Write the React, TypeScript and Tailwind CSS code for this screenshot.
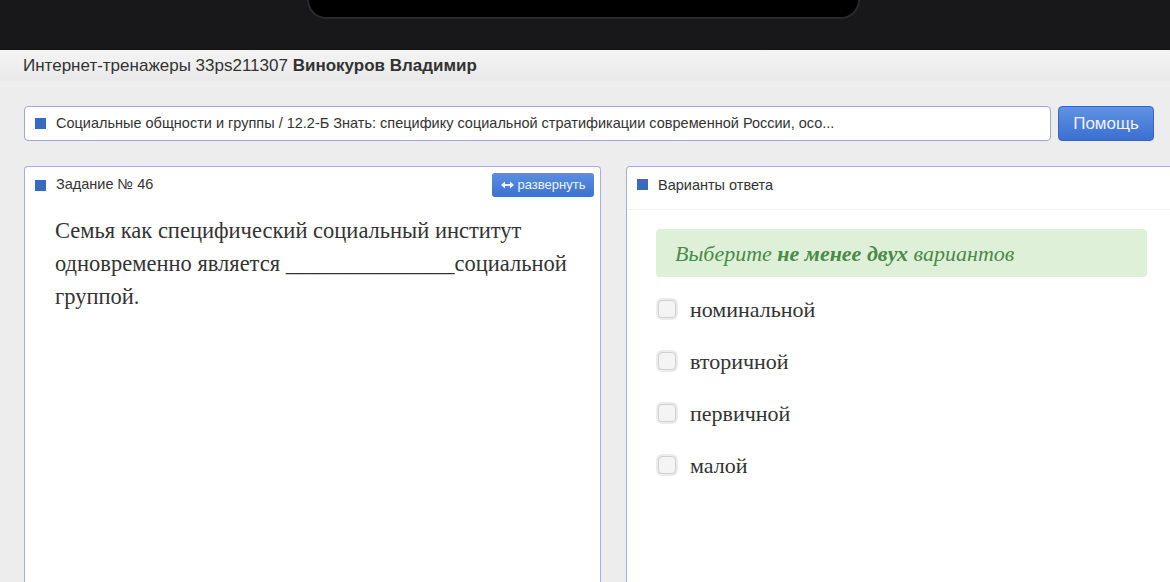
import React from "react";

const sans = { fontFamily: '"Liberation Sans", Arial, sans-serif' };
const serif = { fontFamily: '"Liberation Serif", "Times New Roman", serif' };

function Square() {
  return <span className="inline-block w-[11px] h-[11px] bg-[#3a69c2] shrink-0" />;
}

function Checkbox() {
  return (
    <span className="inline-block w-[18px] h-[18px] rounded-[4px] bg-[#f4f4f4] border border-[#cfcfcf] shadow-[0_0_0_2px_#ececec] shrink-0" />
  );
}

export default function App() {
  const options = ["номинальной", "вторичной", "первичной", "малой"];
  return (
    <div className="w-[1170px] h-[582px] overflow-hidden bg-[#ededed] flex flex-col" style={sans}>
      {/* top dark bar */}
      <div className="h-[50px] bg-[#18181b] shrink-0 flex">
        <div className="ml-[307px] w-[553px] h-[19px] bg-black rounded-b-[34px] border-2 border-t-0 border-[#2a2a2d]" />
      </div>
      {/* header */}
      <div className="h-[31px] shrink-0 bg-gradient-to-b from-[#f4f4f4] to-[#e9e9e9] flex items-center pl-[23px] text-[17px] text-[#333]">
        <span>
          Интернет-тренажеры 33ps211307 <b>Винокуров Владимир</b>
        </span>
      </div>
      <div className="flex-1 flex flex-col pl-[24px] pt-[25px] min-h-0">
        {/* topic row */}
        <div className="flex gap-[7px] pr-[16px] h-[35px] shrink-0">
          <div className="flex-1 bg-white border border-[#a3a6cf] rounded-[4px] flex items-center gap-[10px] pl-[10px] text-[14.5px] text-[#333]">
            <Square />
            <span>Социальные общности и группы / 12.2-Б Знать: специфику социальной стратификации современной России, осо...</span>
          </div>
          <button className="w-[96px] rounded-[4px] bg-gradient-to-b from-[#5f93e3] to-[#3c6fd0] border border-[#3a66bf] text-[#eef3fc] text-[17px] flex items-center justify-center">
            Помощь
          </button>
        </div>
        {/* panels */}
        <div className="flex gap-[25px] mt-[25px] flex-1 min-h-0">
          <div className="w-[577px] shrink-0 bg-white border border-b-0 border-[#a9aed8] rounded-t-[4px] flex flex-col">
            <div className="h-[36px] flex items-center pl-[10px] pr-[6px] gap-[10px] text-[14.5px] text-[#333]">
              <Square />
              <span className="flex-1">Задание № 46</span>
              <button className="w-[102px] h-[24px] rounded-[3px] bg-gradient-to-b from-[#5b8fe0] to-[#3d70d0] text-[#eef3fc] text-[13px] flex items-center justify-center gap-[4px]">
                <svg width="13" height="8" viewBox="0 0 13 8" fill="#eef3fc">
                  <path d="M0 4 L4 0.5 L4 3 L9 3 L9 0.5 L13 4 L9 7.5 L9 5 L4 5 L4 7.5 Z" />
                </svg>
                развернуть
              </button>
            </div>
            <div className="pl-[30px] pr-[20px] pt-[11px] text-[22.5px] leading-[33px] text-[#333]" style={serif}>
              Семья как специфический социальный институт одновременно является _______________социальной группой.
            </div>
          </div>
          <div className="w-[577px] shrink-0 bg-white border border-b-0 border-[#a9aed8] rounded-t-[4px] flex flex-col">
            <div className="h-[43px] flex items-start pt-[12px] pl-[10px] gap-[10px] text-[14.5px] text-[#333] border-b border-[#f3f3f3]">
              <Square />
              <span className="-mt-[2px] leading-[16px]">Варианты ответа</span>
            </div>
            <div className="pl-[29px] pr-[10px] pt-[19px]">
              <div className="w-[491px] h-[48px] bg-[#dff0d8] rounded-[4px] flex items-center pl-[19px] text-[22px] italic text-[#4a8a49]" style={serif}>
                Выберите&nbsp;<b>не менее двух</b>&nbsp;вариантов
              </div>
              <div className="flex flex-col mt-[6px]">
                {options.map((o) => (
                  <div key={o} className="h-[52px] flex items-center gap-[14px] pl-[2px] text-[22px] text-[#333]" style={serif}>
                    <Checkbox />
                    <span>{o}</span>
                  </div>
                ))}
              </div>
            </div>
          </div>
        </div>
      </div>
    </div>
  );
}
